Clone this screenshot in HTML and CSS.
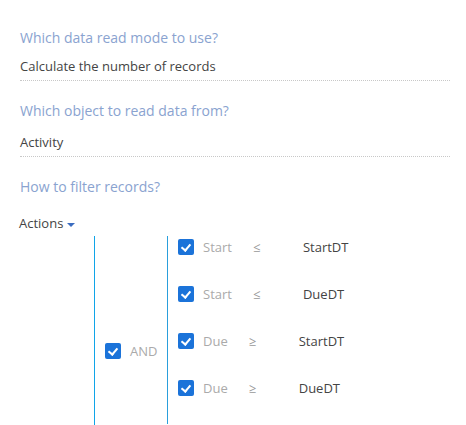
FILE: index.html
```html
<!DOCTYPE html>
<html lang="en">
<head>
    <meta charset="UTF-8">
    <meta name="viewport" content="width=device-width, initial-scale=1.0">
    <title>Read data settings</title>
    <link rel="stylesheet" href="styles.css">
</head>
<body>
    <div class="settings">
        <div class="field">
            <div class="field-label">Which data read mode to use?</div>
            <div class="field-value">Calculate the number of records</div>
        </div>

        <div class="field field-lookup">
            <div class="field-label">Which object to read data from?</div>
            <div class="field-value">Activity</div>
        </div>

        <div class="field-label">How to filter records?</div>

        <div class="actions">Actions<span class="caret"></span></div>

        <div class="filter-tree">
            <div class="filter-group">
                <div class="group-head">
                    <span class="check"></span>
                    <span class="group-op">AND</span>
                </div>
                <ul class="conditions">
                    <li class="condition">
                        <span class="check"></span>
                        <span class="cond-column">Start</span>
                        <span class="cond-op">&le;</span>
                        <span class="cond-value">StartDT</span>
                    </li>
                    <li class="condition">
                        <span class="check"></span>
                        <span class="cond-column">Start</span>
                        <span class="cond-op">&le;</span>
                        <span class="cond-value">DueDT</span>
                    </li>
                    <li class="condition">
                        <span class="check"></span>
                        <span class="cond-column">Due</span>
                        <span class="cond-op">&ge;</span>
                        <span class="cond-value">StartDT</span>
                    </li>
                    <li class="condition">
                        <span class="check"></span>
                        <span class="cond-column">Due</span>
                        <span class="cond-op">&ge;</span>
                        <span class="cond-value">DueDT</span>
                    </li>
                </ul>
            </div>
        </div>
    </div>
</body>
</html>
```

FILE: styles.css
```css
body {
    margin: 0;
    font-family: "Open Sans", "Noto Sans", sans-serif;
    font-size: 13px;
    color: #444;
    background-color: #fff;
}

.settings {
    padding: 26px 16px 0 20px;
}

.field {
    margin-bottom: 18px;
}

.field-label {
    font-size: 14px;
    line-height: 24px;
    color: #8aa3d0;
}

.field-value {
    margin-top: 5px;
    line-height: 22px;
    padding-bottom: 3px;
    border-bottom: 1px dotted #c8c8c8;
}

.field-lookup .field-value {
    margin-top: 8px;
}

.actions {
    margin-top: 13px;
    margin-left: -1px;
    line-height: 22px;
    color: #444;
}

.caret {
    display: inline-block;
    width: 0;
    height: 0;
    margin-left: 4px;
    vertical-align: middle;
    border-left: 4px solid transparent;
    border-right: 4px solid transparent;
    border-top: 4px solid #3b6cc0;
}

.filter-tree {
    margin-left: 74px;
    margin-top: 2px;
}

.filter-group {
    display: flex;
    border-left: 1px solid #10a4e8;
    padding-bottom: 2px;
}

.group-head {
    display: flex;
    align-items: center;
    width: 62px;
    padding-left: 10px;
    margin-top: 104px;
    height: 22px;
}

.group-op {
    margin-left: 9px;
    color: #aaa;
}

.conditions {
    list-style: none;
    margin: 0;
    padding: 0 0 0 10px;
    border-left: 1px solid #2a9fdc;
}

.condition {
    display: flex;
    align-items: flex-start;
    height: 47px;
    line-height: 22px;
}

.check {
    position: relative;
    flex-shrink: 0;
    width: 16px;
    height: 16px;
    margin-top: 3px;
    border-radius: 2px;
    background-color: #1b73d9;
}

/* white tick inside the checkbox */
.check::after {
    content: "";
    position: absolute;
    left: 5px;
    top: 3px;
    width: 4px;
    height: 7px;
    border-right: 2px solid #fff;
    border-bottom: 2px solid #fff;
    transform: rotate(40deg);
}

.group-head .check {
    margin-top: 0;
}

.cond-column {
    margin-left: 9px;
    margin-right: 21px;
    color: #aaa;
}

.cond-op {
    width: 50px;
    color: #999;
}

.cond-value {
    color: #444;
}
```
